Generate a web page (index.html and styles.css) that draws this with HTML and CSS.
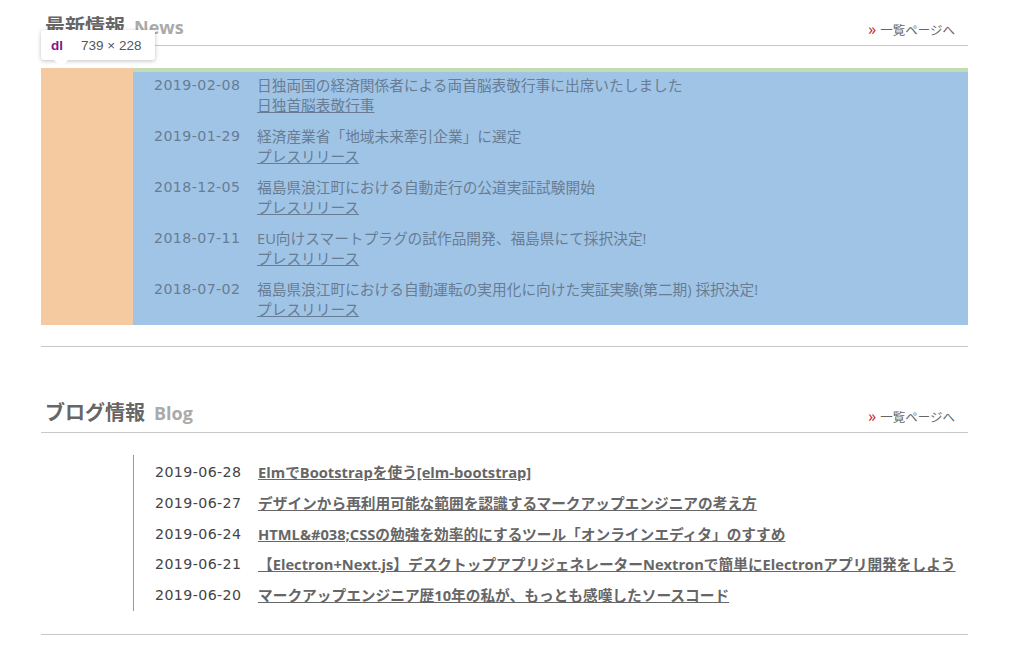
FILE: index.html
```html
<!DOCTYPE html>
<html lang="ja">
<head>
<meta charset="utf-8">
<title>News</title>
<link rel="stylesheet" href="styles.css">
</head>
<body>
<div class="page">
  <section class="sec news">
    <div class="sec-head">
      <h2 class="sec-title">最新情報<span class="en">News</span></h2>
      <a class="more" href="#"><span class="arr">»</span>一覧ページへ</a>
    </div>
    <div class="dl-margin">
      <dl class="news-list">
        <div class="item"><dt>2019-02-08</dt><dd>日独両国の経済関係者による両首脳表敬行事に出席いたしました<br><a href="#">日独首脳表敬行事</a></dd></div>
        <div class="item"><dt>2019-01-29</dt><dd>経済産業省「地域未来牽引企業」に選定<br><a href="#">プレスリリース</a></dd></div>
        <div class="item"><dt>2018-12-05</dt><dd>福島県浪江町における自動走行の公道実証試験開始<br><a href="#">プレスリリース</a></dd></div>
        <div class="item"><dt>2018-07-11</dt><dd>EU向けスマートプラグの試作品開発、福島県にて採択決定!<br><a href="#">プレスリリース</a></dd></div>
        <div class="item"><dt>2018-07-02</dt><dd>福島県浪江町における自動運転の実用化に向けた実証実験(第二期) 採択決定!<br><a href="#">プレスリリース</a></dd></div>
      </dl>
    </div>
    <div class="tip"><b>dl</b><span>739 × 228</span></div>
  </section>
  <section class="sec blog">
    <div class="sec-head">
      <h2 class="sec-title">ブログ情報<span class="en">Blog</span></h2>
      <a class="more" href="#"><span class="arr">»</span>一覧ページへ</a>
    </div>
    <dl class="blog-list">
      <div class="row"><dt>2019-06-28</dt><dd><a href="#">ElmでBootstrapを使う[elm-bootstrap]</a></dd></div>
      <div class="row"><dt>2019-06-27</dt><dd><a href="#">デザインから再利用可能な範囲を認識するマークアップエンジニアの考え方</a></dd></div>
      <div class="row"><dt>2019-06-24</dt><dd><a href="#">HTML&amp;#038;CSSの勉強を効率的にするツール「オンラインエディタ」のすすめ</a></dd></div>
      <div class="row"><dt>2019-06-21</dt><dd><a href="#">【Electron+Next.js】デスクトップアプリジェネレーターNextronで簡単にElectronアプリ開発をしよう</a></dd></div>
      <div class="row"><dt>2019-06-20</dt><dd><a href="#">マークアップエンジニア歴10年の私が、もっとも感嘆したソースコード</a></dd></div>
    </dl>
  </section>
</div>
</body>
</html>
```
FILE: styles.css
```css
html, body {
  margin: 0;
  padding: 0;
  background: #fff;
}
body {
  font-family: "Open Sans", "Noto Sans CJK JP", sans-serif;
  color: #444;
}
.page {
  width: 927px;
  margin-left: 41px;
}
.sec {
  position: relative;
  border-bottom: 1px solid #c8c8c8;
}
.sec-head {
  display: flex;
  align-items: flex-end;
  justify-content: space-between;
  border-bottom: 1px solid #c8c8c8;
  height: 45px;
}
.sec-title {
  margin: 0 0 5px 4px;
  font-size: 20px;
  font-weight: 700;
  color: #666;
  line-height: 26px;
}
.sec-title .en {
  margin-left: 9px;
  color: #aaa;
  font-size: 18px;
}
.more {
  margin: 0 13px 6px 0;
  font-size: 12.5px;
  color: #666;
  text-decoration: none;
  line-height: 16px;
}
.more .arr {
  color: #c0272d;
  font-size: 16px;
  margin-right: 4px;
}
.news {
  padding-bottom: 21px;
}
.dl-margin {
  margin-top: 22px;
  background: #f6caa0;
  padding-left: 92px;
}
.news-list {
  margin: 0;
  background: #a0c4e6;
  border-top: 4px solid #c4dcb4;
  padding: 3px 0 6px 21px;
  font-size: 14.7px;
  color: #687c94;
}
.news-list .item {
  display: flex;
  line-height: 20px;
  margin-bottom: 11px;
}
.news-list .item:last-child {
  margin-bottom: 0;
}
.news-list dt,
.blog-list dt {
  width: 103px;
  flex: none;
  font-family: "DejaVu Sans", sans-serif;
  font-size: 14.2px;
  letter-spacing: 0.4px;
}
.news-list dd {
  margin: 0;
}
.news-list a {
  color: #687c94;
}
.tip {
  position: absolute;
  left: 0;
  top: 30px;
  width: 114px;
  height: 30px;
  background: #fff;
  border-radius: 3px;
  box-shadow: 0 1px 4px rgba(0,0,0,0.25);
  display: flex;
  align-items: center;
  font-family: "Liberation Sans", sans-serif;
  font-size: 13.5px;
  color: #555;
}
.tip::after {
  content: "";
  position: absolute;
  left: 13px;
  bottom: -7px;
  border-left: 7px solid transparent;
  border-right: 7px solid transparent;
  border-top: 7px solid #fff;
}
.tip b {
  color: #881280;
  margin-left: 10px;
  margin-right: 18px;
}
.blog {
  margin-top: 46px;
}
.blog .sec-head {
  height: 39px;
}
.blog .sec-title {
  margin-bottom: 6px;
}
.blog-list {
  margin: 22px 0 23px 92px;
  border-left: 1px solid #999;
  padding: 7px 0 5px 21px;
  font-size: 14.7px;
}
.blog-list .row {
  display: flex;
  line-height: 21px;
  margin-bottom: 9.75px;
}
.blog-list .row:last-child {
  margin-bottom: 0;
}
.blog-list dt {
  color: #444;
}
.blog-list dd {
  margin: 0;
}
.blog-list a {
  color: #666;
  font-weight: 700;
}
```
